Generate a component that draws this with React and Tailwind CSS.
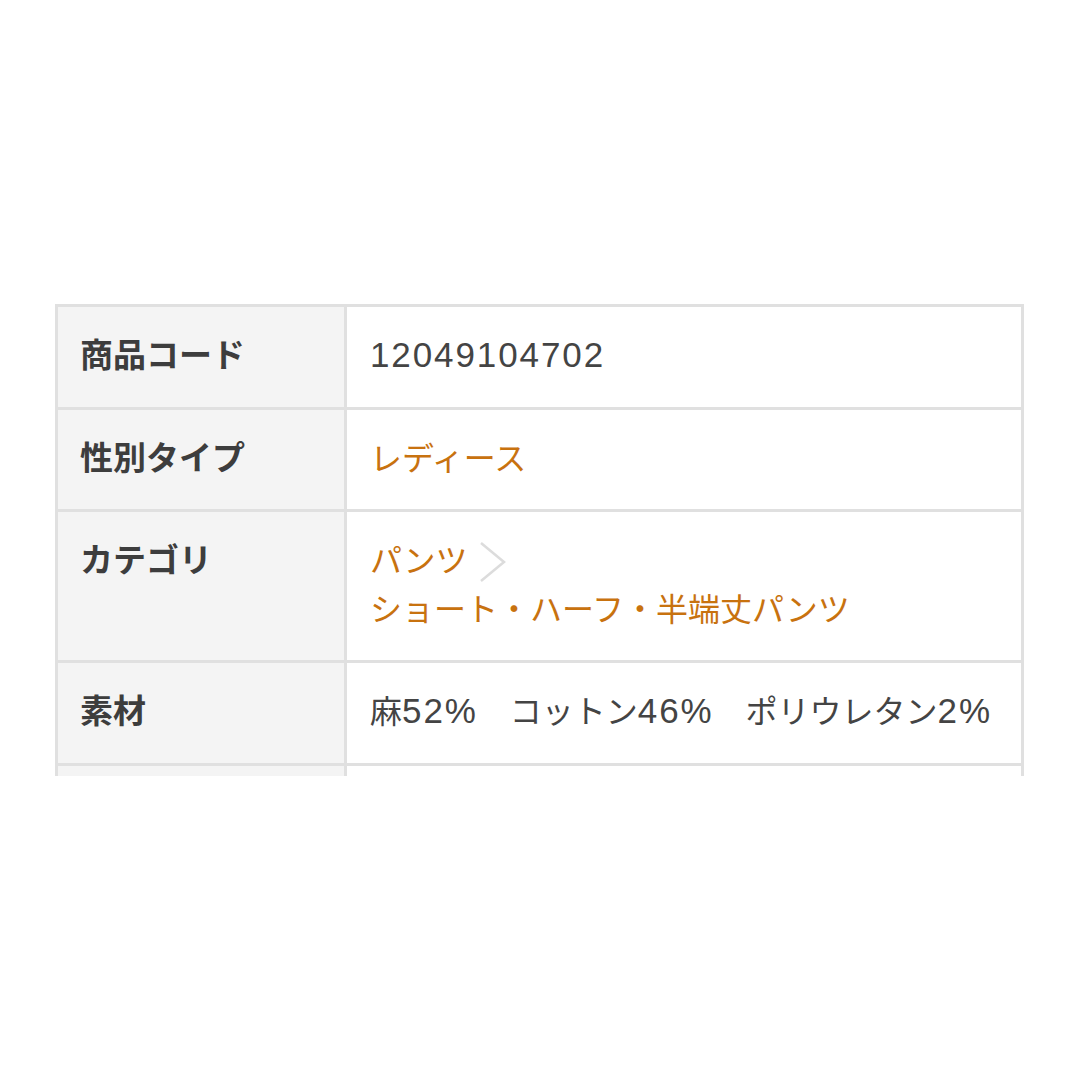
import React from 'react';

const Num = ({ children }) => (
  <span className="text-[35px] tracking-[1.9px]" style={{ fontFamily: '"Liberation Sans", sans-serif' }}>
    {children}
  </span>
);

const rows = [
  { label: '商品コード', value: <Num>12049104702</Num> },
  { label: '性別タイプ', value: <span className="text-[#c8720f]">レディース</span> },
  { label: 'カテゴリ', category: true },
  {
    label: '素材',
    value: (
      <>
        麻<Num>52%</Num>　コットン<Num>46%</Num>　ポリウレタン<Num>2%</Num>
      </>
    ),
  },
  { label: '', value: '' },
];

const Chevron = () => (
  <svg className="inline-block align-middle ml-[11px] -mt-[2px]" width="28" height="42" viewBox="0 0 28 42" fill="none">
    <path d="M2 2 L25 21 L2 40" stroke="#dcdcdc" strokeWidth="2.5" />
  </svg>
);

const App = () => {
  return (
    <div className="w-[1080px] h-[1080px] bg-white" style={{ fontFamily: '"Noto Sans CJK JP", "Noto Sans", sans-serif' }}>
      <div className="pt-[304px] pl-[55px]">
        <div className="w-[969px] h-[472px] overflow-hidden border-t-[3px] border-l-[3px] border-[#e0e0e0]">
          {rows.map((row, i) => (
            <div key={i} className="flex">
              <div className="w-[289px] shrink-0 bg-[#f4f4f4] border-r-[3px] border-b-[3px] border-[#e0e0e0] pl-[22px] pt-[22px] pb-[28px] text-[33px] leading-[49px] font-bold text-[#3d3d3d] min-h-[102px]">
                {row.label}
              </div>
              <div className="flex-1 bg-white border-r-[3px] border-b-[3px] border-[#e0e0e0] pl-[23px] pr-[16px] pt-[22px] pb-[28px] text-[32px] leading-[49px] text-[#444444]">
                {row.category ? (
                  <div className="text-[#c8720f]">
                    <div>
                      パンツ
                      <Chevron />
                    </div>
                    <div>ショート・ハーフ・半端丈パンツ</div>
                  </div>
                ) : (
                  row.value
                )}
              </div>
            </div>
          ))}
        </div>
      </div>
    </div>
  );
};

export default App;
